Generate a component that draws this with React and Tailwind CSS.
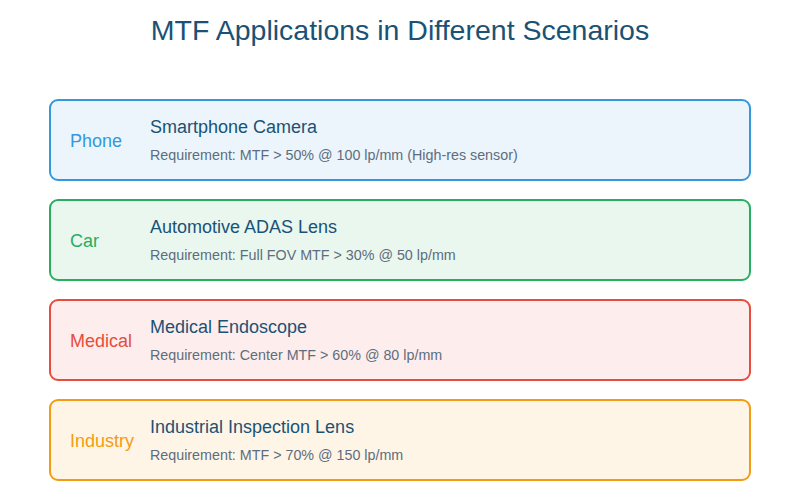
import React from "react";

const scenarios = [
  {
    tag: "Phone",
    title: "Smartphone Camera",
    req: "Requirement: MTF > 50% @ 100 lp/mm (High-res sensor)",
    box: "border-[#3498db] bg-[#ebf5fb]",
    tagColor: "text-[#3498db]",
  },
  {
    tag: "Car",
    title: "Automotive ADAS Lens",
    req: "Requirement: Full FOV MTF > 30% @ 50 lp/mm",
    box: "border-[#27ae60] bg-[#e9f7ef]",
    tagColor: "text-[#27ae60]",
  },
  {
    tag: "Medical",
    title: "Medical Endoscope",
    req: "Requirement: Center MTF > 60% @ 80 lp/mm",
    box: "border-[#e74c3c] bg-[#fdedec]",
    tagColor: "text-[#e74c3c]",
  },
  {
    tag: "Industry",
    title: "Industrial Inspection Lens",
    req: "Requirement: MTF > 70% @ 150 lp/mm",
    box: "border-[#f39c12] bg-[#fef5e7]",
    tagColor: "text-[#f39c12]",
  },
];

function ScenarioCard({ tag, title, req, box, tagColor }) {
  return (
    <div className={`flex h-[82px] w-[702px] items-center rounded-[9px] border-2 ${box}`}>
      <div className={`mt-[2px] w-[99px] pl-[19px] text-[18px] ${tagColor}`}>{tag}</div>
      <div className="flex flex-col pb-[1px]">
        <div className="text-[18px] leading-[22px] text-[#1a5276]">{title}</div>
        <div className="mt-[8px] text-[14.3px] leading-[18px] text-[#5d6d7e]">{req}</div>
      </div>
    </div>
  );
}

export default function App() {
  return (
    <div
      className="flex h-[500px] w-[800px] flex-col items-center bg-white"
      style={{ fontFamily: '"Liberation Sans", Arial, sans-serif' }}
    >
      <h1 className="mt-[13px] text-[28.5px] leading-[34px] text-[#1a5276]">
        MTF Applications in Different Scenarios
      </h1>
      <div className="mt-[52px] flex flex-col gap-[18px]">
        {scenarios.map((s) => (
          <ScenarioCard key={s.tag} {...s} />
        ))}
      </div>
    </div>
  );
}
